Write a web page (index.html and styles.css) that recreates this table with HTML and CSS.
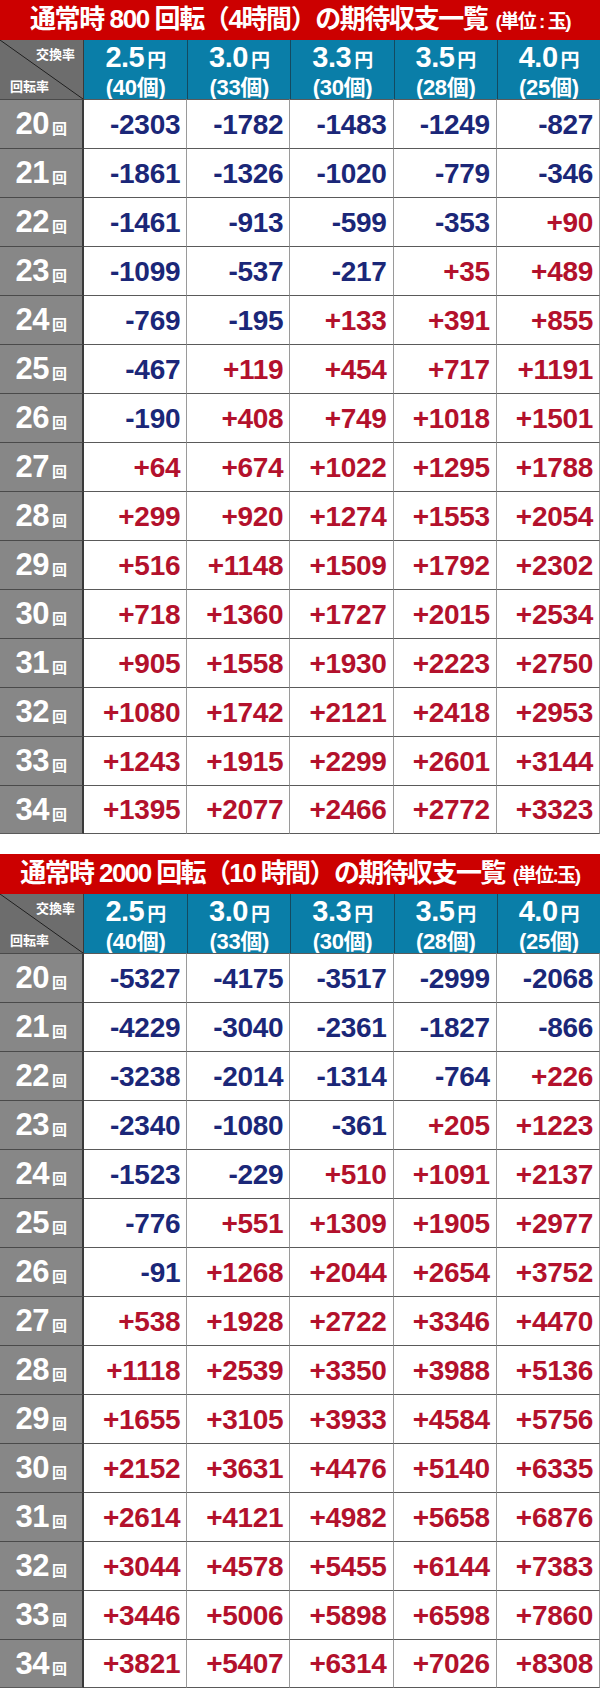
FILE: index.html
```html
<!DOCTYPE html>
<html lang="ja">
<head>
<meta charset="utf-8">
<link rel="stylesheet" href="styles.css">
</head>
<body>
<div class="page">

<section class="tbl">
  <div class="title"><span class="t-main">通常時 800 回転（4時間）の期待収支一覧</span><span class="t-unit">(単位 : 玉)</span></div>
  <div class="corner"><span class="c-top">交換率</span><span class="c-bot">回転率</span></div>
  <div class="hd"><div class="hd-rate">2.5<span class="yen">円</span></div><div class="hd-cnt">(40個)</div></div>
  <div class="hd"><div class="hd-rate">3.0<span class="yen">円</span></div><div class="hd-cnt">(33個)</div></div>
  <div class="hd"><div class="hd-rate">3.3<span class="yen">円</span></div><div class="hd-cnt">(30個)</div></div>
  <div class="hd"><div class="hd-rate">3.5<span class="yen">円</span></div><div class="hd-cnt">(28個)</div></div>
  <div class="hd"><div class="hd-rate">4.0<span class="yen">円</span></div><div class="hd-cnt">(25個)</div></div>

  <div class="lb">20<span class="kai">回</span></div><div class="c n">-2303</div><div class="c n">-1782</div><div class="c n">-1483</div><div class="c n">-1249</div><div class="c n">-827</div>
  <div class="lb">21<span class="kai">回</span></div><div class="c n">-1861</div><div class="c n">-1326</div><div class="c n">-1020</div><div class="c n">-779</div><div class="c n">-346</div>
  <div class="lb">22<span class="kai">回</span></div><div class="c n">-1461</div><div class="c n">-913</div><div class="c n">-599</div><div class="c n">-353</div><div class="c p">+90</div>
  <div class="lb">23<span class="kai">回</span></div><div class="c n">-1099</div><div class="c n">-537</div><div class="c n">-217</div><div class="c p">+35</div><div class="c p">+489</div>
  <div class="lb">24<span class="kai">回</span></div><div class="c n">-769</div><div class="c n">-195</div><div class="c p">+133</div><div class="c p">+391</div><div class="c p">+855</div>
  <div class="lb">25<span class="kai">回</span></div><div class="c n">-467</div><div class="c p">+119</div><div class="c p">+454</div><div class="c p">+717</div><div class="c p">+1191</div>
  <div class="lb">26<span class="kai">回</span></div><div class="c n">-190</div><div class="c p">+408</div><div class="c p">+749</div><div class="c p">+1018</div><div class="c p">+1501</div>
  <div class="lb">27<span class="kai">回</span></div><div class="c p">+64</div><div class="c p">+674</div><div class="c p">+1022</div><div class="c p">+1295</div><div class="c p">+1788</div>
  <div class="lb">28<span class="kai">回</span></div><div class="c p">+299</div><div class="c p">+920</div><div class="c p">+1274</div><div class="c p">+1553</div><div class="c p">+2054</div>
  <div class="lb">29<span class="kai">回</span></div><div class="c p">+516</div><div class="c p">+1148</div><div class="c p">+1509</div><div class="c p">+1792</div><div class="c p">+2302</div>
  <div class="lb">30<span class="kai">回</span></div><div class="c p">+718</div><div class="c p">+1360</div><div class="c p">+1727</div><div class="c p">+2015</div><div class="c p">+2534</div>
  <div class="lb">31<span class="kai">回</span></div><div class="c p">+905</div><div class="c p">+1558</div><div class="c p">+1930</div><div class="c p">+2223</div><div class="c p">+2750</div>
  <div class="lb">32<span class="kai">回</span></div><div class="c p">+1080</div><div class="c p">+1742</div><div class="c p">+2121</div><div class="c p">+2418</div><div class="c p">+2953</div>
  <div class="lb">33<span class="kai">回</span></div><div class="c p">+1243</div><div class="c p">+1915</div><div class="c p">+2299</div><div class="c p">+2601</div><div class="c p">+3144</div>
  <div class="lb">34<span class="kai">回</span></div><div class="c p">+1395</div><div class="c p">+2077</div><div class="c p">+2466</div><div class="c p">+2772</div><div class="c p">+3323</div>
</section>

<section class="tbl">
  <div class="title"><span class="t-main t-main2">通常時 2000 回転（10 時間）の期待収支一覧</span><span class="t-unit">(単位:玉)</span></div>
  <div class="corner"><span class="c-top">交換率</span><span class="c-bot">回転率</span></div>
  <div class="hd"><div class="hd-rate">2.5<span class="yen">円</span></div><div class="hd-cnt">(40個)</div></div>
  <div class="hd"><div class="hd-rate">3.0<span class="yen">円</span></div><div class="hd-cnt">(33個)</div></div>
  <div class="hd"><div class="hd-rate">3.3<span class="yen">円</span></div><div class="hd-cnt">(30個)</div></div>
  <div class="hd"><div class="hd-rate">3.5<span class="yen">円</span></div><div class="hd-cnt">(28個)</div></div>
  <div class="hd"><div class="hd-rate">4.0<span class="yen">円</span></div><div class="hd-cnt">(25個)</div></div>

  <div class="lb">20<span class="kai">回</span></div><div class="c n">-5327</div><div class="c n">-4175</div><div class="c n">-3517</div><div class="c n">-2999</div><div class="c n">-2068</div>
  <div class="lb">21<span class="kai">回</span></div><div class="c n">-4229</div><div class="c n">-3040</div><div class="c n">-2361</div><div class="c n">-1827</div><div class="c n">-866</div>
  <div class="lb">22<span class="kai">回</span></div><div class="c n">-3238</div><div class="c n">-2014</div><div class="c n">-1314</div><div class="c n">-764</div><div class="c p">+226</div>
  <div class="lb">23<span class="kai">回</span></div><div class="c n">-2340</div><div class="c n">-1080</div><div class="c n">-361</div><div class="c p">+205</div><div class="c p">+1223</div>
  <div class="lb">24<span class="kai">回</span></div><div class="c n">-1523</div><div class="c n">-229</div><div class="c p">+510</div><div class="c p">+1091</div><div class="c p">+2137</div>
  <div class="lb">25<span class="kai">回</span></div><div class="c n">-776</div><div class="c p">+551</div><div class="c p">+1309</div><div class="c p">+1905</div><div class="c p">+2977</div>
  <div class="lb">26<span class="kai">回</span></div><div class="c n">-91</div><div class="c p">+1268</div><div class="c p">+2044</div><div class="c p">+2654</div><div class="c p">+3752</div>
  <div class="lb">27<span class="kai">回</span></div><div class="c p">+538</div><div class="c p">+1928</div><div class="c p">+2722</div><div class="c p">+3346</div><div class="c p">+4470</div>
  <div class="lb">28<span class="kai">回</span></div><div class="c p">+1118</div><div class="c p">+2539</div><div class="c p">+3350</div><div class="c p">+3988</div><div class="c p">+5136</div>
  <div class="lb">29<span class="kai">回</span></div><div class="c p">+1655</div><div class="c p">+3105</div><div class="c p">+3933</div><div class="c p">+4584</div><div class="c p">+5756</div>
  <div class="lb">30<span class="kai">回</span></div><div class="c p">+2152</div><div class="c p">+3631</div><div class="c p">+4476</div><div class="c p">+5140</div><div class="c p">+6335</div>
  <div class="lb">31<span class="kai">回</span></div><div class="c p">+2614</div><div class="c p">+4121</div><div class="c p">+4982</div><div class="c p">+5658</div><div class="c p">+6876</div>
  <div class="lb">32<span class="kai">回</span></div><div class="c p">+3044</div><div class="c p">+4578</div><div class="c p">+5455</div><div class="c p">+6144</div><div class="c p">+7383</div>
  <div class="lb">33<span class="kai">回</span></div><div class="c p">+3446</div><div class="c p">+5006</div><div class="c p">+5898</div><div class="c p">+6598</div><div class="c p">+7860</div>
  <div class="lb">34<span class="kai">回</span></div><div class="c p">+3821</div><div class="c p">+5407</div><div class="c p">+6314</div><div class="c p">+7026</div><div class="c p">+8308</div>
</section>

</div>
</body>
</html>
```

FILE: styles.css
```css
* { box-sizing: border-box; margin: 0; padding: 0; }

body {
  margin: 0;
  width: 600px;
  background: #ffffff;
  font-family: "Liberation Sans", "Noto Sans CJK JP", sans-serif;
  font-weight: bold;
}

.page {
  display: flex;
  flex-direction: column;
  gap: 20px;
}

.tbl {
  display: grid;
  grid-template-columns: 84px repeat(5, 1fr);
  grid-auto-rows: 49px;
  grid-template-rows: 40px 59px;
}

.title {
  grid-column: 1 / -1;
  background: #cc0000;
  color: #ffffff;
  display: flex;
  justify-content: center;
  align-items: baseline;
  padding-top: 4px;
  white-space: nowrap;
}

.t-main {
  font-size: 26px;
  letter-spacing: -1.4px;
  line-height: 30px;
}

.t-main2 { letter-spacing: -1.6px; }

.t-unit {
  font-size: 19px;
  letter-spacing: -1.5px;
  margin-left: 8px;
}

.corner {
  background: linear-gradient(to top right, #6d6d6d calc(50% - 0.8px), #1e1e1e 50%, #6d6d6d calc(50% + 0.8px));
  border-right: 1px solid #3a3a3a;
  color: #ffffff;
  font-size: 13px;
  display: flex;
  flex-direction: column;
  justify-content: space-between;
  padding: 4px 8px 4px 10px;
}

.c-top { align-self: flex-end; }
.c-bot { align-self: flex-start; }

.hd {
  background: #0a7ea8;
  color: #ffffff;
  border-left: 1px solid #144a60;
  display: flex;
  flex-direction: column;
  align-items: center;
  justify-content: center;
  padding-top: 3px;
}

.tbl > .corner + .hd { border-left: none; }

.hd-rate {
  font-size: 29px;
  line-height: 28px;
  letter-spacing: -0.5px;
}

.yen {
  font-size: 19px;
  margin-left: 3px;
}

.hd-cnt {
  font-size: 22px;
  line-height: 25px;
  letter-spacing: -0.3px;
}

.lb {
  background: #878787;
  color: #ffffff;
  border-top: 1px solid #4a4a4a;
  border-right: 2px solid #3a3a3a;
  display: flex;
  align-items: baseline;
  justify-content: center;
  padding-top: 7px;
  font-size: 31px;
  line-height: 33px;
  letter-spacing: -0.5px;
}

.kai {
  font-size: 15px;
  margin-left: 3px;
}

.c {
  background: #ffffff;
  border-top: 1px solid #5a5a5a;
  border-right: 1px solid #9a9a9a;
  display: flex;
  align-items: center;
  justify-content: flex-end;
  padding-right: 6px;
  padding-top: 1px;
  font-size: 28px;
  letter-spacing: -0.3px;
}

.tbl > .c:nth-child(6n + 2) { border-right: none; }

.tbl > .c:nth-last-child(-n + 6),
.tbl > .lb:nth-last-child(-n + 6) { border-bottom: 1px solid #5a5a5a; }

.n { color: #1b2778; }
.p { color: #b3112c; }
```
